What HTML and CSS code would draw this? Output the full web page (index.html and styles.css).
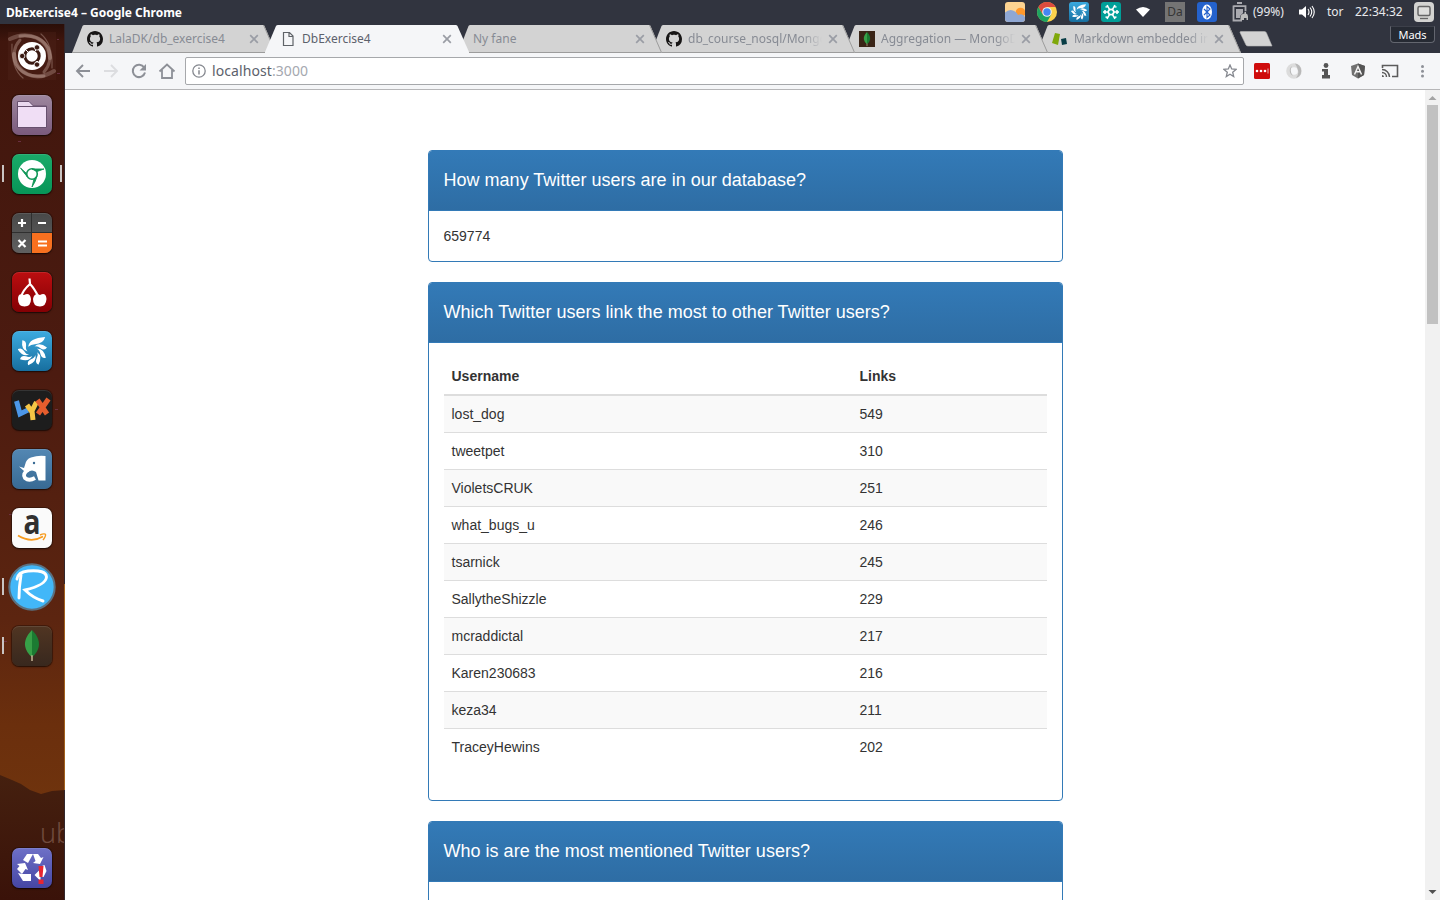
FILE: index.html
```html
<!DOCTYPE html>
<html lang="da">
<head>
<meta charset="utf-8">
<title>DbExercise4</title>
<link rel="stylesheet" href="styles.css">
</head>
<body>
<svg class="defs" width="0" height="0" aria-hidden="true">
  <defs>
    <linearGradient id="sky" x1="0" y1="0" x2="0" y2="1"><stop offset="0" stop-color="#2a0e08"/><stop offset=".02" stop-color="#40160d"/><stop offset=".4" stop-color="#4c1b10"/><stop offset=".68" stop-color="#5c2510"/><stop offset=".8" stop-color="#6b2f0d"/><stop offset="1" stop-color="#74390e"/></linearGradient>
    <linearGradient id="hill" x1="0" y1="0" x2="0" y2="1"><stop offset="0" stop-color="#45200f"/><stop offset="1" stop-color="#3a1209"/></linearGradient>
    <linearGradient id="blue" x1="0" y1="0" x2="0" y2="1"><stop offset="0" stop-color="#3aa9df"/><stop offset="1" stop-color="#176f9f"/></linearGradient>
    <symbol id="github" viewBox="0 0 16 16"><path fill="#171515" d="M8 0C3.58 0 0 3.58 0 8c0 3.54 2.29 6.53 5.47 7.59.4.07.55-.17.55-.38 0-.19-.01-.82-.01-1.49-2.01.37-2.53-.49-2.69-.94-.09-.23-.48-.94-.82-1.13-.28-.15-.68-.52-.01-.53.63-.01 1.08.58 1.23.82.72 1.21 1.87.87 2.33.66.07-.52.28-.87.51-1.07-1.78-.2-3.64-.89-3.64-3.95 0-.87.31-1.59.82-2.15-.08-.2-.36-1.02.08-2.12 0 0 .67-.21 2.2.82.64-.18 1.32-.27 2-.27s1.36.09 2 .27c1.53-1.04 2.2-.82 2.2-.82.44 1.1.16 1.92.08 2.12.51.56.82 1.27.82 2.15 0 3.07-1.87 3.75-3.65 3.95.29.25.54.73.54 1.48 0 1.07-.01 1.93-.01 2.2 0 .21.15.46.55.38A8.01 8.01 0 0 0 16 8c0-4.42-3.58-8-8-8z"/></symbol>
    <symbol id="tabshape" viewBox="0 0 204 29"><path d="M0 29 L10.500 2 Q11 1 12.500 1 H190.500 Q192 1 192.500 2 L204 29Z" fill="#d3d3d3"/><path d="M191.500 1 L203.500 28.500 H0" fill="none" stroke="#9c9c9c"/></symbol>
    <path id="blade" d="M-1.500 -3.800Q-1.500 -9.500 6.500 -10.500 Q7 -7 3 -6.300 Q-.3 -6 -1.500 -3.800Z"/>
    <symbol id="swirl" viewBox="-12 -12 24 24"><g fill="#fff"><path d="M-3.500 -3.500Q-3 -10.500 10.500 -11.500 Q9 -5.800 2 -5.600 Q-1.500 -5.600 -3.500 -3.500Z"/><use href="#blade" transform="rotate(45)"/><use href="#blade" transform="rotate(85)"/><use href="#blade" transform="rotate(125)"/><use href="#blade" transform="rotate(165)"/><use href="#blade" transform="rotate(205)"/><use href="#blade" transform="rotate(245)"/><use href="#blade" transform="rotate(285)"/></g></symbol>
    <symbol id="leaf" viewBox="0 0 16 34"><path d="M8 0C2 6 0 12 1 17q1 6 7 11Z" fill="#37a047"/><path d="M8 0c6 6 8 12 7 17q-1 6-7 11Z" fill="#1b7b32"/><path d="M8 26v6" stroke="#c9b99a" stroke-width="1.500"/></symbol>
    <symbol id="close" viewBox="0 0 10 10"><path d="M1.200 1.200l7.600 7.600M8.800 1.200l-7.600 7.600" stroke="#9a9da5" stroke-width="1.700"/></symbol>
  </defs>
</svg>

<header class="topbar">
  <div class="window-title">DbExercise4 – Google Chrome</div>
  <div class="tray">
    <svg width="20" height="20" viewBox="0 0 20 20"><rect width="20" height="20" rx="3" fill="#fcd391"/><circle cx="15.500" cy="10.500" r="4.800" fill="#ff982c"/><path d="M0 10.500Q5 6 10 9.500q2 1 3 3.500 5-2 7 2v2q0 3-3 3H3q-3 0-3-3Z" fill="#8fa7d3"/></svg>
    <svg width="20" height="20" viewBox="-10 -10 20 20"><circle r="10" fill="#fdd24d"/><path d="M-8.660 -5A10 10 0 0 1 8.660 -5H0L-4.300 2.500Z" fill="#dc4b3e"/><path d="M-8.660 -5A10 10 0 0 0 0 10L4.300 2.500H-4.300Z" fill="#1da362"/><circle r="4.800" fill="#f2f2f2"/><circle r="3.700" fill="#4587f3"/></svg>
    <svg width="20" height="20"><rect width="20" height="20" rx="3" fill="url(#blue)"/><use href="#swirl" x="2" y="2" width="16" height="16"/></svg>
    <svg width="20" height="20" viewBox="-10 -10 20 20"><rect x="-10" y="-10" width="20" height="20" rx="3" fill="#009f98"/><circle r="2.700" fill="none" stroke="#fff" stroke-width="1.700"/><path d="M3 0H8M-3 0H-8M1.500 2.600L4 7M1.500-2.600L4-7M-1.500 2.600L-4 7M-1.500-2.600L-4-7M2.500 5.500l3-.5M2.500-5.500l3 .5M-2.500 5.500l-3-.5M-2.500-5.500l-3 .5M6-2v4M-6-2v4" fill="none" stroke="#fff" stroke-width="1.500"/></svg>
    <svg class="wifi" width="16" height="12"><path d="M1 3.500Q8-1.500 15 3.500L8 11Z" fill="#fff"/></svg>
    <div class="keyboard">Da</div>
    <svg width="20" height="20"><rect width="20" height="20" rx="3" fill="#2462cc"/><ellipse cx="10" cy="10" rx="5" ry="7.500" fill="#fff"/><path d="M7 7l6 6-3 2.500v-11L13 7l-6 6" fill="none" stroke="#2462cc" stroke-width="1.100"/></svg>
    <svg class="battery" width="17" height="20" viewBox="0 0 17 20"><path d="M5 1h5M1.500 4.200h12v5M1.500 3.500v15H10" fill="none" stroke="#aaaab0" stroke-width="1.800"/><path d="M4 7h7v4l-3 3v2H4Z" fill="#aaaab0"/><path d="M8.500 18v-3q0-3 4-3.500V10h1.500v1.500q2 .5 2 3V18H14.500v-2h-2.500v2Z" fill="#bbb"/></svg>
    <span class="percent">(99%)</span>
    <svg width="16" height="14" viewBox="0 0 16 14"><path d="M0 4.500h3L7 1v12L3 9.500H0Z" fill="#fff"/><path d="M9 4q2 3 0 6M11 2.500q3.500 4.500 0 9M13 1q4.500 6 0 12" fill="none" stroke="#fff" stroke-width="1.100"/></svg>
    <span>tor</span>
    <span class="clock">22:34:32</span>
    <svg width="20" height="20"><rect width="20" height="20" rx="4" fill="#d3d3d1"/><rect x="4" y="4.500" width="12" height="9" rx="1.500" fill="#dededc" stroke="#666" stroke-width="1.500"/><path d="M6 16.500h8" stroke="#666" stroke-width="1.300"/></svg>
  </div>
</header>

<div class="desktop">
  <nav class="launcher">
    <svg class="wallpaper" width="65" height="876"><rect width="65" height="876" fill="url(#sky)"/><path d="M0 751L12 756 21 760 30 766 41 770 52 767 65 766V876H0Z" fill="url(#hill)"/><text x="40" y="819" class="brand">ub</text><g fill="#7b3b57" opacity=".7"><path d="M57 15h2v1h-2zM20 37h3v1h-3zM57 49h3v1h-3zM18 117h3v1h-3zM55 385h3v1h-3zM9 490h4v1H9zM3 617h4v1H3z"/></g><path d="M64.500 0V560" stroke="#33272c"/><path d="M64.500 560V766" stroke="#a2611d"/><path d="M64.500 766V876" stroke="#33272c"/></svg>
    <div class="app">
      <svg class="dash" width="48" height="48" viewBox="-24 -24 48 48"><rect x="-24" y="-24" width="48" height="48" fill="#53271d" opacity=".3"/><g fill="none" stroke="#d8b9ae" stroke-linecap="round"><path d="M-22-17Q-8-24 5-18 17-12 18 2" stroke-width="4" opacity=".3"/><path d="M-12-20Q8-22 16-8 21 6 12 16" stroke-width="3" opacity=".35"/><path d="M22 15Q8 24-5 18-17 12-18-2" stroke-width="4" opacity=".3"/><path d="M12 20Q-8 22-16 8-21-6-12-16" stroke-width="3" opacity=".35"/><path d="M-20-12Q-21 12-9 22M20 12Q21-12 9-22" stroke-width="1.200" opacity=".35"/></g><circle r="14" fill="#fff"/><circle r="7.200" fill="none" stroke="#3a1a12" stroke-width="3"/><path d="M-4-4l-3-3M5 5l3 3M3-5l4-4M-11 0h3M4 5l3 4" stroke="#fff" stroke-width="1"/><g fill="#3a1a12" stroke="#fff" stroke-width=".8"><circle cx="-9.800" r="2.700"/><circle cx="5" cy="-8.600" r="2.700"/><circle cx="5" cy="8.600" r="2.700"/></g></svg>
    </div>
    <div class="app files">
      <svg width="42" height="42"><path d="M6.500 33.500V7.500H18L22.500 12H35.500V33.500Z" fill="#ead9ef" stroke="#67506e"/><path d="M7 13h28v20H7z" fill="#f0def5"/><path d="M7 12.500h28" stroke="#67506e"/></svg>
    </div>
    <div class="app chromium running focused">
      <svg width="42" height="42" viewBox="-21 -21 42 42"><circle r="14" fill="#fff"/><circle r="5.300" fill="none" stroke="#109657" stroke-width="1.600"/><path d="M-11.500-6Q-8-1-4.500 3L-6-1ZM12-5H0L5-2.500ZM0 13Q4 7 5 2L2 5Z" fill="#109657" stroke="#109657" stroke-width=".9"/></svg>
    </div>
    <div class="app calculator">
      <svg width="42" height="42"><path d="M21 21h21v15q0 6-6 6H21Z" fill="#f8701f"/><path d="M20.500 0v42M0 20.500h42" stroke="#2f2f2f"/><path d="M7 11h8M11 7v8M27 11h8M7.500 28l7 7M14.500 28l-7 7M27 29.500h9M27 33.500h9" stroke="#fff" stroke-width="2.200"/></svg>
    </div>
    <div class="app cherry">
      <svg width="42" height="42"><path d="M18.500 7.500L19 13Q12 19 10 26M19 13Q23 17 27 25" fill="none" stroke="#fff" stroke-width="2.200"/><path d="M13 24Q19 21 20 28 20 35.500 13.500 35.500 7 35.500 7 28 7 21.500 13 24ZM29 24Q35 21 35.500 28 35 35.500 29 35.500 22 35.500 22 28 23 21.500 29 24Z" fill="#fff"/></svg>
    </div>
    <div class="app shutter"><svg width="42" height="42"><use href="#swirl" x="7" y="6" width="29" height="30"/></svg></div>
    <div class="app lyx">
      <svg width="42" height="42" fill="none" stroke-width="5"><path d="M5.500 12l3.500 13 8-4" stroke="#4b96e8"/><path d="M16 16l5 7M25.500 13l-4.500 9 1 9" stroke="#f5c545"/><path d="M26.500 11l9.500 14M37.500 10L27 25" stroke="#e55d2d"/></svg>
    </div>
    <div class="app elephant">
      <svg width="42" height="42"><path d="M14 17Q15 11 20 9.500 27 7 34.500 8V32.500H27.500L25 24Q21 21 17 24L13 23 8 18.500 13 20Z" fill="#fff"/><path d="M17 22Q11 26 14 30 18 33.500 24 30" fill="none" stroke="#fff" stroke-width="3.800"/><circle cx="23" cy="15" r="1.200" fill="#386a94"/></svg>
    </div>
    <div class="app amazon"><svg width="42" height="42"><text x="12.500" y="26.500" textLength="17" lengthAdjust="spacingAndGlyphs" class="amazon-letter">a</text><path d="M7 28.500q13 8 25 1" fill="none" stroke="#f79b1e" stroke-width="1.700"/><path d="M29 28q5-2 5.500-.5T32 33" fill="none" stroke="#f79b1e" stroke-width="1.400"/></svg></div>
    <div class="app running">
      <svg class="dash" width="48" height="48" viewBox="-24 -24 48 48"><circle r="22.700" fill="#42b7f8" stroke="#5b7180" stroke-width="2"/><path d="M-11-12Q-13 0-13 11M-15-8Q-14-15-4-16 14-17.500 14.500-10 14-2-7 3 1 11 11 14" fill="none" stroke="#fff" stroke-width="2.900" stroke-linecap="round"/></svg>
    </div>
    <div class="app mongo running"><svg width="42" height="42"><use href="#leaf" x="13" y="5" width="16" height="33"/></svg></div>
    <div class="app trash">
      <svg width="42" height="42"><g fill="#fff"><path d="M12 13l4-6h6l-5 9Z"/><path d="M22 7h5l3 4 2.500-1-3.500 7-7-1 2.500-2Z"/><path d="M28.500 20l5-2 2 6-3 6h-3v4l-6-6 6-6v3h1Z"/><path d="M11 27h9v7h-8l-5-8Z"/><path d="M6 17l8-1 3 7-2.500-1-3.500 5-5-5 2.500-3Z"/></g><path d="M27.500 19h5l-1 11h-3zM27.500 32.500h5V37h-5z" fill="#e82631"/></svg>
    </div>
  </nav>

  <div class="browser">
    <div class="tabstrip">
      <div class="tab t1"><svg class="shape" width="204" height="29"><use href="#tabshape"/></svg><svg class="favicon" width="16" height="16"><use href="#github"/></svg><span class="label">LalaDK/db_exercise4</span><svg class="x" width="10" height="10"><use href="#close"/></svg></div>
      <div class="tab active"><svg class="shape" width="204" height="29"><path d="M0 28L11 2Q11.500 1 13 1H190.500Q192 1 192.500 2L204 28V29H0Z" fill="#f5f6f8"/></svg><svg class="favicon" width="16" height="16"><path d="M3.500 1.500h6l3.500 3.500v9.500h-9.500zM9 1.500v4h4" fill="none" stroke="#5f6368" stroke-width="1.200"/></svg><span class="label">DbExercise4</span><svg class="x" width="10" height="10"><use href="#close"/></svg></div>
      <div class="tab t3"><svg class="shape" width="204" height="29"><use href="#tabshape"/></svg><span class="label">Ny fane</span><svg class="x" width="10" height="10"><use href="#close"/></svg></div>
      <div class="tab t4"><svg class="shape" width="204" height="29"><use href="#tabshape"/></svg><svg class="favicon" width="16" height="16"><use href="#github"/></svg><span class="label fade">db_course_nosql/Mongo</span><svg class="x" width="10" height="10"><use href="#close"/></svg></div>
      <div class="tab t5"><svg class="shape" width="204" height="29"><use href="#tabshape"/></svg><svg class="favicon" width="16" height="16"><rect width="16" height="16" fill="#3a2416"/><use href="#leaf" x="4" y="1" width="8" height="15"/></svg><span class="label fade">Aggregation — MongoD</span><svg class="x" width="10" height="10"><use href="#close"/></svg></div>
      <div class="tab t6"><svg class="shape" width="204" height="29"><use href="#tabshape"/></svg><svg class="favicon" width="16" height="16"><path d="M3 2l5 1-2 11-6-2Z" fill="#7fa80b"/><path d="M9 8l5-1 1 6-5 1Z" fill="#083d46"/></svg><span class="label fade tight">Markdown embedded in</span><svg class="x" width="10" height="10"><use href="#close"/></svg></div>
      <svg class="newtab" width="34" height="16"><path d="M2 .5H25.500Q27 .5 27.500 2L33 15H9Q7.500 15 7 14L1 1.500Q.8.500 2 .5Z" fill="#d3d3d3" stroke="#b6b6b6" stroke-width=".6"/></svg>
      <div class="profile">Mads</div>
    </div>

    <div class="toolbar">
      <div class="nav-buttons">
        <svg width="16" height="16" fill="none" stroke="#8d9097" stroke-width="1.900"><path d="M15 8H2M8 2L2 8l6 6"/></svg>
        <svg width="16" height="16" fill="none" stroke="#dcdde0" stroke-width="1.900"><path d="M1 8h13M8 2l6 6-6 6"/></svg>
        <svg width="16" height="16"><path d="M13.200 4.500A6.200 6.200 0 1 0 14 9.500" fill="none" stroke="#8d9097" stroke-width="2"/><path d="M15 1v6.500H8.500Z" fill="#8d9097"/></svg>
        <svg width="18" height="16"><path d="M1.500 8.500L9 1.500l7.500 7M4 7v8h10V7" fill="none" stroke="#8d9097" stroke-width="1.800"/></svg>
      </div>
      <div class="omnibox">
        <svg width="14" height="14"><circle cx="7" cy="7" r="6.200" fill="none" stroke="#85888f" stroke-width="1.300"/><path d="M7 6.200v4.300M7 3.500v1.600" stroke="#85888f" stroke-width="1.500"/></svg>
        <span class="url">localhost<span class="port">:3000</span></span>
        <svg width="14" height="14" viewBox="0 0 14 14"><path d="M7 1l1.700 4 4.300.4-3.300 2.800 1 4.300L7 10.200l-3.700 2.300 1-4.300L1 5.400 5.300 5Z" fill="none" stroke="#85888f" stroke-width="1.300"/></svg>
      </div>
      <div class="extensions">
        <svg width="16" height="16"><rect width="16" height="16" rx="1.500" fill="#cf0c0c"/><circle cx="3" cy="8" r="1.300" fill="#fff"/><circle cx="7" cy="8" r="1.300" fill="#fff"/><circle cx="11" cy="8" r="1.300" fill="#fff"/><path d="M14 5.500v5" stroke="#eab0b0"/></svg>
        <svg width="16" height="16"><circle cx="8" cy="8" r="5.800" fill="none" stroke="#dcdcdc" stroke-width="4"/><path d="M9 .5a7.500 7.500 0 0 1 1 14.500q5-5-1-14.500M7 13A6 6 0 0 1 6 3Q3 8 7 13" fill="#b8b8b8"/></svg>
        <svg width="16" height="16"><circle cx="8" cy="2.500" r="2.400" fill="#555"/><path d="M4 6h6v6h2v3.500H4V12h2V8.500H4Z" fill="#555"/></svg>
        <svg width="16" height="16"><path d="M8 .5l7 2.500-1 9-6 3.500L2 12 1 3Z" fill="#707070"/><path d="M8 .5l7 2.500-1 9-6 3.500Z" fill="#555"/><path d="M4.500 11.500L8 3.500l3.500 8M6 8.800h4" fill="none" stroke="#f4f4f4" stroke-width="1.400"/></svg>
        <svg width="18" height="16"><path d="M1.500 5V2.500h15v11H11" fill="none" stroke="#5b5b5b" stroke-width="1.600"/><path d="M1 6.500a7.500 7.500 0 0 1 7.500 7.500M1 9.500a4.500 4.500 0 0 1 4.500 4.500" fill="none" stroke="#5b5b5b" stroke-width="1.500"/><path d="M1 12a2 2 0 0 1 2 2H1Z" fill="#5b5b5b"/></svg>
        <svg width="16" height="16" fill="#8d9097"><circle cx="8.500" cy="3.500" r="1.500"/><circle cx="8.500" cy="8.300" r="1.500"/><circle cx="8.500" cy="13" r="1.500"/></svg>
      </div>
    </div>

    <div class="viewport">
      <main class="page">
        <section class="panel">
          <h3 class="panel-heading">How many Twitter users are in our database?</h3>
          <div class="panel-body">659774</div>
        </section>
        <section class="panel">
          <h3 class="panel-heading">Which Twitter users link the most to other Twitter users?</h3>
          <div class="panel-body">
            <table class="table">
              <thead><tr><th class="user">Username</th><th>Links</th></tr></thead>
              <tbody>
                <tr><td>lost_dog</td><td>549</td></tr>
                <tr><td>tweetpet</td><td>310</td></tr>
                <tr><td>VioletsCRUK</td><td>251</td></tr>
                <tr><td>what_bugs_u</td><td>246</td></tr>
                <tr><td>tsarnick</td><td>245</td></tr>
                <tr><td>SallytheShizzle</td><td>229</td></tr>
                <tr><td>mcraddictal</td><td>217</td></tr>
                <tr><td>Karen230683</td><td>216</td></tr>
                <tr><td>keza34</td><td>211</td></tr>
                <tr><td>TraceyHewins</td><td>202</td></tr>
              </tbody>
            </table>
          </div>
        </section>
        <section class="panel">
          <h3 class="panel-heading">Who is are the most mentioned Twitter users?</h3>
          <div class="panel-body tall"></div>
        </section>
      </main>
      <div class="scrollbar">
        <svg width="15" height="15"><path d="M3.500 10L7.500 6l4 4Z" fill="#a3a3a3"/></svg>
        <div class="track"><div class="thumb"></div></div>
        <svg width="15" height="15"><path d="M3.500 5L7.500 9l4-4Z" fill="#505050"/></svg>
      </div>
    </div>
  </div>
</div>
</body>
</html>
```
FILE: styles.css
```css
* { box-sizing: border-box; }
body { margin: 0; width: 1440px; height: 900px; overflow: hidden; display: flex; flex-direction: column; background: #fff; font-family: "Noto Sans", sans-serif; font-size: 12px; }
svg { display: block; flex: none; }
.defs { position: absolute; }

.topbar { height: 24px; flex: none; display: flex; justify-content: space-between; align-items: center; padding-left: 6px; background: #31343f; color: #e8e9ed; }
.window-title { font-weight: 700; font-size: 12px; color: #fff; letter-spacing: -0.01px; }
.tray { width: 435px; height: 24px; display: grid; grid-template-columns: 32px 32px 32px 32px 32px 32px 35px 21px 46px 28px 28px 59px 26px; align-items: center; white-space: nowrap; }
.tray > span { position: relative; top: -1px; }
.wifi { margin-left: 2px; }
.keyboard { width: 20px; height: 20px; background: #747474; color: #363636; text-align: center; line-height: 19px; }

.desktop { flex: 1; min-height: 0; display: flex; }
.launcher { position: relative; width: 65px; flex: none; padding: 12px 0 12px 12px; display: flex; flex-direction: column; gap: 19px; overflow: hidden; }
.wallpaper { position: absolute; left: 0; top: 0; }
.brand { font: 27px "Noto Sans", sans-serif; fill: #704a3c; font-weight: 300; }
.app { position: relative; width: 40px; height: 40px; flex: none; border-radius: 7px; display: flex; align-items: center; justify-content: center; }
.app svg { margin: -4px; }
.running::before, .focused::after { content: ""; position: absolute; left: -10px; top: 11px; width: 2px; height: 17px; background: #c9c4c2; }
.focused::after { left: 48px; }
.files, .chromium, .calculator, .cherry, .shutter, .lyx, .elephant, .amazon, .mongo, .trash { box-shadow: inset 0 1px 0 rgba(255,255,255,.1), 0 0 0 1px rgba(0,0,0,.28), 0 1px 2px rgba(0,0,0,.5); }
.files { background: linear-gradient(#9e879f, #7a5a7c); }
.chromium { background: linear-gradient(#1aaa69, #079658); }
.calculator { background: linear-gradient(#484848, #606060); overflow: hidden; }
.cherry { background: linear-gradient(#bb0e10, #840004); }
.shutter { background: linear-gradient(#3dabdf, #176f9f); }
.lyx { background: #1d1d1d; }
.elephant { background: linear-gradient(#5387b3, #386a94); }
.amazon { background: #fafafa; }
.amazon-letter { font: 700 34px "Open Sans", sans-serif; fill: #303030; }
.mongo { background: linear-gradient(#503522, #38281e); }
.trash { background: linear-gradient(#6e70c7, #4546a3); margin-top: auto; }

.browser { flex: 1; min-width: 0; display: flex; flex-direction: column; }
.tabstrip { height: 29px; flex: none; background: #31343f; display: flex; padding-left: 7px; }
.tab { position: relative; width: 204px; height: 29px; flex: none; margin-right: -11px; padding: 0 17px 0 15px; display: flex; align-items: center; gap: 6px; color: #878b94; }
.shape { position: absolute; left: 0; top: 0; z-index: -1; overflow: visible; }
.t1 { z-index: 6; }
.active { z-index: 7; color: #5c616c; }
.t3 { z-index: 5; }
.t4 { z-index: 4; }
.t5 { z-index: 3; }
.t6 { z-index: 2; }
.label { width: 134px; margin-right: -2px; overflow: hidden; white-space: nowrap; line-height: 20px; }
.fade { -webkit-mask-image: linear-gradient(to right, #000 114px, transparent 134px); mask-image: linear-gradient(to right, #000 114px, transparent 134px); }
.tight { letter-spacing: -0.08px; }
.x { margin-left: auto; }
.newtab { margin: 7px 0 0 9px; }
.profile { margin: 2px 5px 0 auto; width: 45px; height: 17px; border: 1px solid #63666f; border-radius: 0 0 4px 4px; border-top-color: #3d404a; background: #262a33; color: #fff; font-size: 11px; line-height: 16px; text-align: center; }

.toolbar { height: 37px; flex: none; background: #f5f6f8; border-bottom: 1px solid #b6b6b8; display: flex; align-items: center; }
.nav-buttons { width: 120px; padding-left: 10px; display: flex; gap: 12px; }
.nav-buttons svg:last-child { margin-left: -1px; }
.omnibox { width: 1059px; height: 28px; padding: 0 6px; display: flex; align-items: center; gap: 6px; background: #fff; border: 1px solid #a6a8ab; border-radius: 2px; }
.url { flex: 1; font-size: 14px; color: #5c616c; line-height: 20px; letter-spacing: 0.08px; }
.port { color: #a5a8af; }
.extensions { display: flex; gap: 16px; margin-left: 10px; }
.extensions svg:nth-child(5) { margin: 0 -1px; }

.viewport { flex: 1; min-height: 0; display: flex; overflow: hidden; }
.page { flex: 1; overflow: hidden; padding-top: 60px; font: 14px/20px "Liberation Sans", Arial, sans-serif; color: #333; }
.panel { width: 635px; margin: 0 auto 20px; border: 1px solid #337ab7; border-radius: 4px; }
.panel-heading { margin: 0; height: 60px; padding: 0 15px; border-bottom: 1px solid #337ab7; background: linear-gradient(#337ab7, #2e6da4); color: #fff; font-size: 18px; font-weight: 400; line-height: 58px; letter-spacing: 0.015px; border-radius: 3px 3px 0 0; }
.panel-body { padding: 15px; }
.tall { height: 200px; }
.table { width: 100%; margin-bottom: 20px; border-collapse: collapse; table-layout: fixed; }
.table th, .table td { padding: 8px; text-align: left; }
.table th { border-bottom: 2px solid #ddd; }
.user { width: 408px; }
.table td { border-top: 1px solid #ddd; }
.table tbody tr:nth-child(odd) { background: #f9f9f9; }

.scrollbar { width: 15px; flex: none; background: #f1f1f1; display: flex; flex-direction: column; }
.track { flex: 1; padding: 0 2px; }
.thumb { height: 219px; background: #c1c1c1; }
```
